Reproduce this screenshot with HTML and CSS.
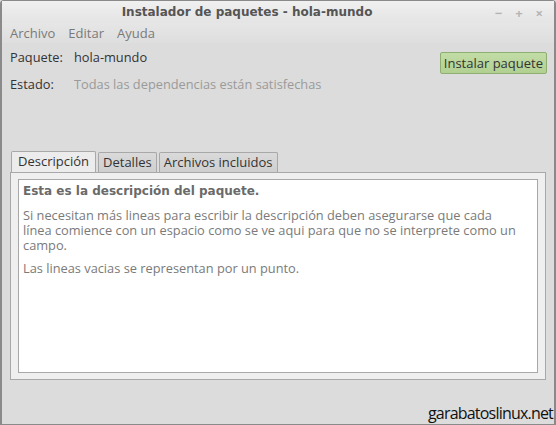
FILE: index.html
```html
<!DOCTYPE html>
<html lang="es">
<head>
    <meta charset="UTF-8">
    <title>Instalador de paquetes - hola-mundo</title>
    <link rel="stylesheet" href="styles.css">
</head>
<body>

<div class="window">
    <div class="titlebar">
        <span class="title">Instalador de paquetes - hola-mundo</span>
        <div class="controls">
            <span class="ctl">&minus;</span>
            <span class="ctl">+</span>
            <span class="ctl">&times;</span>
        </div>
    </div>

    <div class="menubar">
        <span class="menu-item">Archivo</span>
        <span class="menu-item">Editar</span>
        <span class="menu-item">Ayuda</span>
    </div>

    <div class="content">
        <!-- cabecera con datos del paquete -->
        <div class="info">
            <div class="fields">
                <div class="field">
                    <span class="label">Paquete:</span>
                    <span class="value">hola-mundo</span>
                </div>
                <div class="field">
                    <span class="label">Estado:</span>
                    <span class="value muted">Todas las dependencias están satisfechas</span>
                </div>
            </div>
            <button class="install">Instalar paquete</button>
        </div>

        <!-- pestañas -->
        <div class="tabs">
            <span class="tab active">Descripción</span>
            <span class="tab">Detalles</span>
            <span class="tab">Archivos incluidos</span>
        </div>
        <div class="notebook">
            <div class="textview">
                <p class="headline">Esta es la descripción del paquete.</p>
                <p>Si necesitan más lineas para escribir la descripción deben asegurarse que cada línea comience con un espacio como se ve aqui para que no se interprete como un campo.</p>
                <p>Las lineas vacias se representan por un punto.</p>
            </div>
        </div>

        <div class="footer">garabatoslinux.net</div>
    </div>
</div>

</body>
</html>
```

FILE: styles.css
```css
html, body {
    margin: 0;
    height: 100%;
}
body {
    font-family: "Open Sans", "Noto Sans", sans-serif;
    font-size: 13px;
    background-color: #dcdcdc;
}
.window {
    box-sizing: border-box;
    width: 556px;
    height: 425px;
    border: 1px solid #8a8a8a;
    border-left-width: 2px;
    border-right-width: 2px;
    border-radius: 4px 4px 0 0;
    display: flex;
    flex-direction: column;
    background-color: #dcdcdc;
}
.titlebar {
    height: 22px;
    display: flex;
    align-items: center;
    justify-content: center;
    position: relative;
    background: linear-gradient(#f0f0f0, #e4e4e4);
}
.title {
    font-family: "DejaVu Sans", sans-serif;
    font-weight: bold;
    font-size: 12px;
    color: #555;
    margin-left: -62px;
}
.controls {
    position: absolute;
    right: 11px;
    top: 3px;
    display: flex;
    gap: 13px;
    color: #b4b4b4;
    font-size: 13px;
    font-weight: bold;
}
.menubar {
    height: 20px;
    display: flex;
    align-items: center;
    gap: 13px;
    padding-left: 8px;
    color: #7a7a7a;
    background: linear-gradient(#e6e6e6, #dedede);
}
.content {
    flex: 1;
    display: flex;
    flex-direction: column;
    padding: 0 7px 0 8px;
}
.info {
    display: flex;
    justify-content: space-between;
    align-items: flex-start;
    padding-top: 6px;
    height: 102px;
}
.fields {
    display: flex;
    flex-direction: column;
    gap: 10px;
}
.field {
    display: flex;
    line-height: 17px;
    font-size: 12.8px;
}
.label {
    width: 64px;
    color: #333;
}
.value {
    color: #333;
}
.muted {
    color: #9a9a9a;
}
.install {
    font-family: inherit;
    font-size: 13px;
    color: #333;
    background: linear-gradient(#c2dca6, #b2d092);
    border: 1px solid #8fae72;
    border-radius: 2px;
    padding: 1px 3px;
    margin-top: 3px;
    height: 22px;
}
.tabs {
    display: flex;
    gap: 2px;
    padding-left: 1px;
    align-items: flex-end;
}
.tab {
    border: 1px solid #a8a8a8;
    border-bottom: none;
    border-radius: 2px 2px 0 0;
    padding: 0 4px;
    height: 19px;
    line-height: 19px;
    color: #333;
    background: linear-gradient(#dadada, #cfcfcf);
}
.tab.active {
    height: 20px;
    background: #ececec;
    padding: 0 6px;
}
.notebook {
    height: 194px;
    border: 1px solid #a8a8a8;
    background: #efefef;
    padding: 6px 7px;
    margin-right: 1px;
}
.textview {
    box-sizing: border-box;
    height: 100%;
    background: #fff;
    border: 1px solid #a8a8a8;
    padding: 4px 16px 4px 4px;
    color: #7a7a7a;
    font-size: 12.8px;
    line-height: 15px;
}
.textview p {
    margin: 0 0 8px;
}
.textview .headline {
    font-family: "DejaVu Sans", sans-serif;
    font-size: 12px;
    font-weight: bold;
    color: #6a6a6a;
    margin-bottom: 9px;
}
.footer {
    align-self: flex-end;
    margin-top: auto;
    margin-right: -6px;
    font-size: 16px;
    letter-spacing: -0.8px;
    color: #111;
    line-height: 20px;
    padding-bottom: 1px;
}
```
